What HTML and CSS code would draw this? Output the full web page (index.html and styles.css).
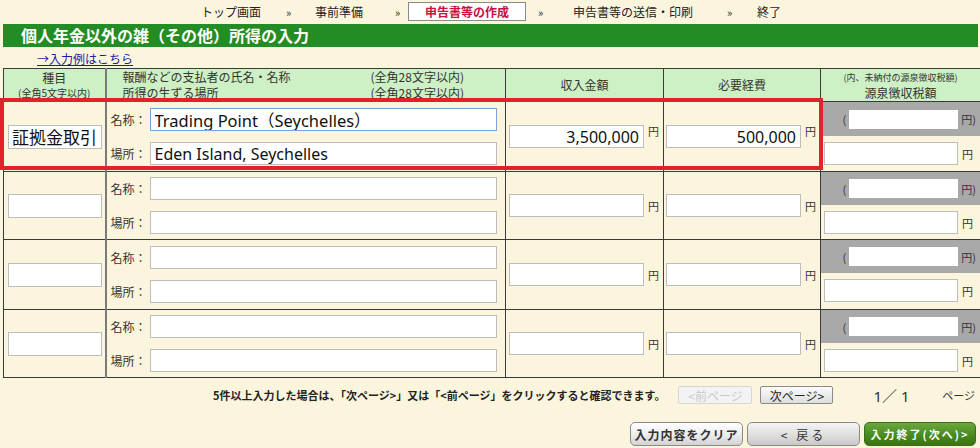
FILE: index.html
```html
<!DOCTYPE html>
<html lang="ja">
<head>
<meta charset="utf-8">
<title>個人年金以外の雑（その他）所得の入力</title>
<link rel="stylesheet" href="styles.css">
</head>
<body>
<nav class="steps">
  <span class="step">トップ画面</span><span class="sep">»</span>
  <span class="step">事前準備</span><span class="sep">»</span>
  <span class="step current">申告書等の作成</span><span class="sep">»</span>
  <span class="step">申告書等の送信・印刷</span><span class="sep">»</span>
  <span class="step">終了</span>
</nav>
<h1 class="title">個人年金以外の雑（その他）所得の入力</h1>
<div class="example"><a href="#">→入力例はこちら</a></div>

<div class="table-wrap">
<table class="income">
  <colgroup>
    <col class="w-kind"><col class="w-payer"><col class="w-amt"><col class="w-exp"><col class="w-tax">
  </colgroup>
  <thead>
    <tr>
      <th><div class="hl">種目</div><div class="hl small">(全角5文字以内)</div></th>
      <th><div class="hp"><span>報酬などの支払者の氏名・名称</span><span>(全角28文字以内)</span><span>所得の生ずる場所</span><span>(全角28文字以内)</span></div></th>
      <th>収入金額</th>
      <th>必要経費</th>
      <th><div class="hl tiny">(内、未納付の源泉徴収税額)</div><div class="hl">源泉徴収税額</div></th>
    </tr>
  </thead>
  <tbody>
    <tr class="first">
      <td class="c-kind"><input class="kind big" value="証拠金取引"></td>
      <td class="c-payer">
        <div class="line"><span class="lbl">名称：</span><input class="txt focus" value="Trading Point（Seychelles）"></div>
        <div class="line"><span class="lbl">場所：</span><input class="txt" value="Eden Island, Seychelles"></div>
      </td>
      <td><div class="amt"><input class="num" value="3,500,000"><span class="yen">円</span></div></td>
      <td><div class="amt exp"><input class="num" value="500,000"><span class="yen">円</span></div></td>
      <td class="c-tax">
        <div class="unpaid"><span>(</span><input class="inner"><span>円)</span></div>
        <div class="withheld"><input class="num2"><span>円</span></div>
      </td>
    </tr>
    <tr class="row-a">
      <td class="c-kind"><input class="kind"></td>
      <td class="c-payer">
        <div class="line"><span class="lbl">名称：</span><input class="txt"></div>
        <div class="line"><span class="lbl">場所：</span><input class="txt"></div>
      </td>
      <td><div class="amt"><input class="num"><span class="yen">円</span></div></td>
      <td><div class="amt exp"><input class="num"><span class="yen">円</span></div></td>
      <td class="c-tax">
        <div class="unpaid"><span>(</span><input class="inner"><span>円)</span></div>
        <div class="withheld"><input class="num2"><span>円</span></div>
      </td>
    </tr>
    <tr class="row-b">
      <td class="c-kind"><input class="kind"></td>
      <td class="c-payer">
        <div class="line"><span class="lbl">名称：</span><input class="txt"></div>
        <div class="line"><span class="lbl">場所：</span><input class="txt"></div>
      </td>
      <td><div class="amt"><input class="num"><span class="yen">円</span></div></td>
      <td><div class="amt exp"><input class="num"><span class="yen">円</span></div></td>
      <td class="c-tax">
        <div class="unpaid"><span>(</span><input class="inner"><span>円)</span></div>
        <div class="withheld"><input class="num2"><span>円</span></div>
      </td>
    </tr>
    <tr class="row-a">
      <td class="c-kind"><input class="kind"></td>
      <td class="c-payer">
        <div class="line"><span class="lbl">名称：</span><input class="txt"></div>
        <div class="line"><span class="lbl">場所：</span><input class="txt"></div>
      </td>
      <td><div class="amt"><input class="num"><span class="yen">円</span></div></td>
      <td><div class="amt exp"><input class="num"><span class="yen">円</span></div></td>
      <td class="c-tax">
        <div class="unpaid"><span>(</span><input class="inner"><span>円)</span></div>
        <div class="withheld"><input class="num2"><span>円</span></div>
      </td>
    </tr>
  </tbody>
</table>
<div class="highlight"></div>
</div>

<div class="pager">
  <p class="note">5件以上入力した場合は、「次ページ&gt;」又は「&lt;前ページ」をクリックすると確認できます。</p>
  <button class="pbtn prev" disabled>&lt;前ページ</button>
  <button class="pbtn nextp">次ページ&gt;</button>
  <span class="pnum">1／ 1</span>
  <span class="punit">ページ</span>
</div>

<div class="actions">
  <button class="btn">入力内容をクリア</button>
  <button class="btn back">&lt; 戻る</button>
  <button class="btn go">入力終了(次へ)&gt;</button>
</div>
</body>
</html>
```

FILE: styles.css
```css
* { box-sizing: border-box; }
html, body { margin: 0; padding: 0; }
body {
  background: #fcf5dd;
  font-family: "Noto Sans CJK JP", sans-serif;
  font-size: 12px;
  color: #222;
  width: 980px;
  height: 448px;
  overflow: hidden;
}

/* step navigation */
.steps {
  display: grid;
  grid-template-columns: 85px 29px 80px 13px 130px 35px 154px 30px auto;
  align-items: center;
  height: 23px;
  padding-left: 201px;
  font-size: 12px;
  line-height: 14px;
}
.sep { font-size: 11px; }
.current {
  width: 118px;
  height: 19px;
  border: 1px solid #8a8a8a;
  background: #fff;
  color: #c8123e;
  font-weight: bold;
  text-align: center;
  line-height: 17px;
}

/* title */
.title {
  margin: 1px 2px 0 3px;
  height: 23px;
  background: #248c24;
  color: #fff;
  font-size: 16px;
  font-weight: bold;
  line-height: 23px;
  padding-left: 18px;
}
.example {
  height: 21px;
  padding-left: 37px;
  padding-top: 5px;
  font-size: 12px;
  line-height: 14px;
}
.example a { color: #1b1ba8; text-decoration: underline; }

/* table */
.table-wrap { position: relative; padding-left: 3px; }
.income {
  table-layout: fixed;
  width: 977px;
  border-collapse: collapse;
}
.w-kind { width: 102px; }
.w-payer { width: 400px; }
.w-amt { width: 158px; }
.w-exp { width: 157px; }
.w-tax { width: 160px; }
.income th, .income td { border: 1px solid #3a3a3a; padding: 0; }
.income th:first-child, .income td:first-child { border-right: 2px solid #7a7a7a; }
.income th {
  background: #cdf1c5;
  font-weight: normal;
  height: 32px;
  font-size: 12px;
  line-height: 16px;
  color: #333;
  vertical-align: middle;
}
.hl { line-height: 15px; }
.small { font-size: 10px; }
.tiny { font-size: 9px; }
.hp {
  display: grid;
  grid-template-columns: 248px auto;
  grid-auto-rows: 16px;
  text-align: left;
  padding-left: 16px;
  line-height: 16px;
}

.first { height: 70px; }
.row-a { height: 68px; }
.row-b { height: 70px; }
.income td { vertical-align: middle; }

input {
  font-family: "Noto Sans", "Noto Sans CJK JP", sans-serif;
  font-size: 16px;
  color: #111;
  background: #fff;
  border: 1px solid #bdbdbd;
  height: 23px;
  margin: 0;
  padding: 0 4px;
  outline: none;
}
.kind { width: 94px; height: 24px; margin-left: 4px; padding: 0 3px; }
.kind.big { font-size: 17px; }

.c-payer {
  padding: 0 !important;
}
.line {
  display: flex;
  align-items: center;
  padding-left: 4px;
}
.line + .line { margin-top: 11px; }
.lbl { width: 39px; font-size: 12px; color: #333; }
.txt { width: 347px; }
.txt.focus { border-color: #7ba3d6; font-size: 16.5px; }

.amt {
  display: flex;
  align-items: center;
  padding-left: 3px;
}
.amt.exp { padding-left: 2px; }
.num { width: 135px; text-align: right; }
.yen { margin-left: 4px; font-size: 11px; color: #333; }
.first .yen { align-self: flex-start; margin-top: -2px; }

.c-tax { vertical-align: top !important; }
.unpaid {
  height: 33px;
  background: #a9a9a9;
  display: flex;
  align-items: center;
  justify-content: flex-end;
  padding-right: 4px;
  font-size: 11px;
  color: #333;
}
.first .unpaid { height: 34px; }
.inner {
  width: 109px;
  height: 19px;
  border: none;
  margin: 0 3px 0 3px;
}
.withheld {
  display: flex;
  align-items: center;
  padding: 6px 0 0 3px;
  font-size: 11px;
  color: #333;
}
.num2 { width: 134px; margin-right: 4px; }

.highlight {
  position: absolute;
  left: 0;
  top: 30px;
  width: 823px;
  height: 72px;
  border: 4px solid #e3212b;
  pointer-events: none;
}

/* pager */
.pager {
  display: flex;
  align-items: center;
  height: 18px;
  margin-top: 8px;
  padding-left: 213px;
  padding-right: 5px;
}
.note { margin: 0; font-weight: bold; font-size: 11px; color: #222; }
.pbtn {
  height: 18px;
  padding: 0;
  font-family: "Noto Sans CJK JP", sans-serif;
  font-size: 12px;
  border-radius: 2px;
}
.prev {
  width: 74px;
  margin-left: 13px;
  color: #c8c8c8;
  background: #f3f3f3;
  border: 1px solid #d6d6d6;
}
.nextp {
  width: 73px;
  margin-left: 8px;
  color: #222;
  background: linear-gradient(#fbfbfb, #dedede);
  border: 1px solid #8a8a8a;
}
.pnum { margin-left: 40px; font-size: 15px; font-family: "Noto Sans", "Noto Sans CJK JP", sans-serif; color: #333; }
.punit { margin-left: auto; font-size: 11px; color: #333; }

/* bottom actions */
.actions {
  display: flex;
  justify-content: flex-end;
  gap: 4px;
  padding-right: 4px;
  margin-top: 18px;
}
.btn {
  width: 113px;
  height: 24px;
  padding: 0;
  border: 1px solid #8a8a8a;
  border-radius: 5px;
  background: linear-gradient(#ffffff, #ececec 55%, #d2d2d2);
  font-family: "Noto Sans CJK JP", sans-serif;
  font-size: 12px;
  font-weight: bold;
  letter-spacing: 1px;
  color: #333;
}
.btn.back { background: linear-gradient(#f4f4f4, #dcdcdc 60%, #c8c8c8); font-weight: normal; letter-spacing: 3px; }
.btn.go {
  width: 112px;
  background: linear-gradient(#6aa83c, #4a8a1e 55%, #3a7410);
  border-color: #3d6e1a;
  color: #fff;
  letter-spacing: 2px;
  font-size: 11px;
}
```
